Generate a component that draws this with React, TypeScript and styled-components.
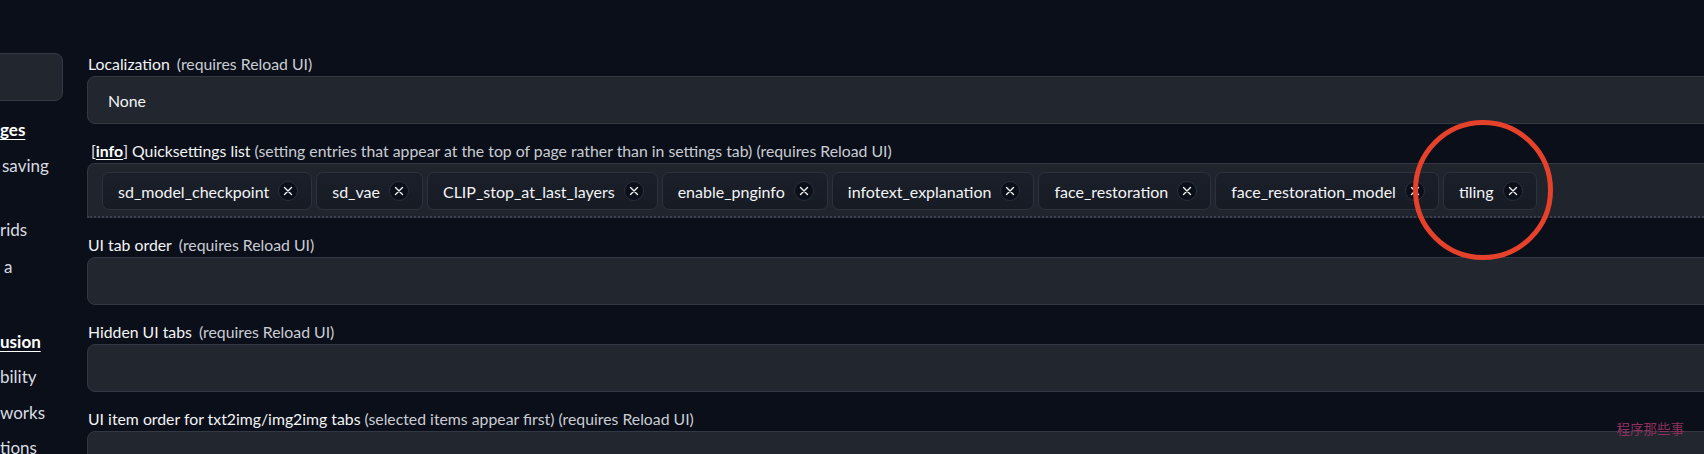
import styled, { createGlobalStyle } from 'styled-components'

const GlobalStyle = createGlobalStyle`
    html, body {
        margin: 0;
        padding: 0;
        background: #0b0f19;
    }
    body {
        font-family: Lato, "Noto Sans", sans-serif;
        color: #e5e7eb;
    }
`

const chips = [
    'sd_model_checkpoint',
    'sd_vae',
    'CLIP_stop_at_last_layers',
    'enable_pnginfo',
    'infotext_explanation',
    'face_restoration',
    'face_restoration_model',
    'tiling',
]

// visible tails of the clipped left navigation
const navItems = [
    { text: 'ges', header: true, top: 19, indent: 0 },
    { text: 'saving', header: false, top: 16, indent: 2 },
    { text: 'rids', header: false, top: 44, indent: 0 },
    { text: 'a', header: false, top: 17, indent: 4 },
    { text: 'usion', header: true, top: 55, indent: 0 },
    { text: 'bility', header: false, top: 15, indent: 0 },
    { text: 'works', header: false, top: 16, indent: 0 },
    { text: 'tions', header: false, top: 15, indent: 0 },
]

const CloseIcon = () => (
    <svg width="10" height="10" viewBox="0 0 10 10">
        <path d="M1.5 1.5 L8.5 8.5 M8.5 1.5 L1.5 8.5" stroke="#f3f4f6" strokeWidth="1.4" strokeLinecap="round" />
    </svg>
)

const App = () => {
    return (
        <>
            <GlobalStyle />
            <Page>
                <Sidebar>
                    <SearchBox />
                    {navItems.map((item) => (
                        <NavItem key={item.text} $header={item.header} $top={item.top} $indent={item.indent}>
                            {item.text}
                        </NavItem>
                    ))}
                </Sidebar>
                <Main>
                    <Setting>
                        <Label>
                            Localization<Hint>(requires Reload UI)</Hint>
                        </Label>
                        <Field>
                            <FieldValue>None</FieldValue>
                        </Field>
                    </Setting>
                    <Setting>
                        <Label $tall>
                            <Bracket>[</Bracket><InfoLink>info</InfoLink><Bracket>]</Bracket> Quicksettings list
                            <Hint $tight>(setting entries that appear at the top of page rather than in settings tab) (requires Reload UI)</Hint>
                        </Label>
                        <ChipBox>
                            {chips.map((name) => (
                                <Chip key={name}>
                                    <ChipText>{name}</ChipText>
                                    <ChipClose><CloseIcon /></ChipClose>
                                </Chip>
                            ))}
                        </ChipBox>
                    </Setting>
                    <Setting>
                        <Label>
                            UI tab order<Hint>(requires Reload UI)</Hint>
                        </Label>
                        <Field />
                    </Setting>
                    <Setting>
                        <Label>
                            Hidden UI tabs<Hint>(requires Reload UI)</Hint>
                        </Label>
                        <Field />
                    </Setting>
                    <Setting>
                        <Label>
                            UI item order for txt2img/img2img tabs
                            <Hint $tight>(selected items appear first) (requires Reload UI)</Hint>
                        </Label>
                        <Field />
                    </Setting>
                </Main>
                <Highlight />
                <Watermark>程序那些事</Watermark>
            </Page>
        </>
    )
}

const Page = styled.div`
    position: relative;
    display: flex;
    width: 100%;
    height: 454px;
    overflow: hidden;
    background: #0b0f19;
`

const Sidebar = styled.div`
    width: 63px;
    flex-shrink: 0;
    padding-top: 53px;
    overflow: hidden;
    box-sizing: border-box;
`

const SearchBox = styled.div`
    margin-left: -24px;
    width: 87px;
    height: 48px;
    box-sizing: border-box;
    border: 1px solid #343a45;
    border-radius: 8px;
    background: #21262f;
`

const NavItem = styled.div<{ $header: boolean; $top: number; $indent: number }>`
    margin-top: ${(props) => props.$top}px;
    padding-left: ${(props) => props.$indent}px;
    height: 20px;
    line-height: 20px;
    font-size: 17px;
    white-space: nowrap;
    color: ${(props) => (props.$header ? '#ffffff' : '#d9dce1')};
    font-weight: ${(props) => (props.$header ? 700 : 400)};
    text-decoration: ${(props) => (props.$header ? 'underline' : 'none')};
    text-underline-offset: 3px;
`

const Main = styled.div`
    flex: 1;
    margin-left: 24px;
    margin-right: -40px;
    padding-top: 53px;
    display: flex;
    flex-direction: column;
    gap: 16px;
`

const Setting = styled.div`
    display: flex;
    flex-direction: column;
`

const Label = styled.div<{ $tall?: boolean }>`
    height: 22px;
    line-height: 22px;
    margin-bottom: 1px;
    padding-left: ${(props) => (props.$tall ? '4px' : '1px')};
    font-size: 15.8px;
    color: #f3f4f6;
    white-space: nowrap;
`

const Hint = styled.span<{ $tight?: boolean }>`
    margin-left: ${(props) => (props.$tight ? '4px' : '7px')};
    color: #c9cdd3;
`

const Bracket = styled.span`
    color: #e5e7eb;
`

const InfoLink = styled.span`
    font-weight: 700;
    color: #ffffff;
    text-decoration: underline;
    text-underline-offset: 2px;
`

const Field = styled.div`
    height: 48px;
    box-sizing: border-box;
    border: 1px solid #333944;
    border-radius: 8px;
    background: #21262f;
    display: flex;
    align-items: center;
    padding-left: 20px;
`

const FieldValue = styled.span`
    font-size: 15.8px;
    color: #f3f4f6;
`

const ChipBox = styled.div`
    height: 55px;
    box-sizing: border-box;
    display: flex;
    align-items: flex-start;
    gap: 4px;
    padding: 8px 0 0 14px;
    border: 1px solid #333944;
    border-bottom: 2px dotted #3b4150;
    border-radius: 8px 8px 0 0;
    background: #1f242d;
`

const Chip = styled.div`
    height: 38px;
    box-sizing: border-box;
    display: flex;
    align-items: center;
    gap: 9px;
    padding: 0 13px 0 15px;
    border: 1px solid #2c323d;
    border-radius: 7px;
    background: linear-gradient(180deg, #1a1f29 0%, #161b24 100%);
    flex-shrink: 0;
`

const ChipText = styled.span`
    font-size: 16px;
    color: #f3f4f6;
    white-space: nowrap;
`

const ChipClose = styled.span`
    width: 20px;
    height: 20px;
    border-radius: 50%;
    background: #0b0f19;
    border: 1px solid #2a303b;
    box-sizing: border-box;
    display: flex;
    align-items: center;
    justify-content: center;
`

const Highlight = styled.div`
    position: absolute;
    left: 1413px;
    top: 120px;
    width: 140px;
    height: 140px;
    box-sizing: border-box;
    border: 5px solid #e5412b;
    border-radius: 50%;
    pointer-events: none;
`

const Watermark = styled.div`
    position: absolute;
    right: 20px;
    bottom: 19px;
    font-family: "Noto Sans CJK SC", sans-serif;
    font-size: 13.5px;
    line-height: 14px;
    color: #8e2f5d;
    pointer-events: none;
`

export default App
